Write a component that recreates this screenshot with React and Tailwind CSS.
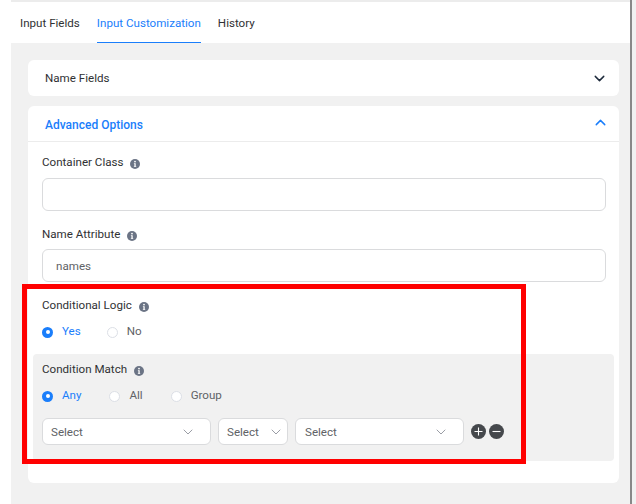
import React from "react";
import { ChevronDown, ChevronUp } from "lucide-react";

function InfoIcon() {
  return (
    <svg width="10" height="10" viewBox="0 0 10 10" className="shrink-0">
      <circle cx="5" cy="5" r="5" fill="#6b7485" />
      <circle cx="5" cy="2.6" r="0.9" fill="#fff" />
      <path d="M3.9 4.2h1.8v3.2h.6v.7H3.8v-.7h.6V4.9h-.5z" fill="#fff" />
    </svg>
  );
}

function Label({ text, className = "" }) {
  return (
    <div className={`flex items-center gap-[7px] h-[16px] text-[11.6px] text-[#303133] ${className}`}>
      <span className="mt-[1px]">{text}</span>
      <span className="mt-[3px]">
        <InfoIcon />
      </span>
    </div>
  );
}

function Radio({ label, checked, className = "" }) {
  return (
    <div className={`flex items-center gap-[9px] ${className}`}>
      {checked ? (
        <span className="w-[11px] h-[11px] rounded-full bg-[#1a7efb] flex items-center justify-center">
          <span className="w-[4px] h-[4px] rounded-full bg-white"></span>
        </span>
      ) : (
        <span className="w-[11px] h-[11px] rounded-full bg-white border border-[#dcdfe6]"></span>
      )}
      <span className={`text-[11.6px] ${checked ? "text-[#1a7efb]" : "text-[#606266]"}`}>{label}</span>
    </div>
  );
}

function FakeSelect({ className = "" }) {
  return (
    <div className={`h-[27px] bg-white border border-[#dadbdd] rounded-[6px] flex items-center justify-between text-[11.6px] text-[#606266] ${className}`}>
      <span className="mt-[3px]">Select</span>
      <ChevronDown size={16} strokeWidth={1.5} className="text-[#9a9da5]" />
    </div>
  );
}

export default function App() {
  return (
    <div className="relative w-[636px] h-[504px] overflow-hidden flex bg-white font-['Roboto','Liberation_Sans',sans-serif]">
      <div className="w-[11px] shrink-0 bg-white"></div>

      <div className="flex-1 flex flex-col bg-[#f1f1f1]">
        {/* tabs */}
        <div className="h-[43px] shrink-0 bg-white border-t-2 border-[#ececec] flex gap-[17px] pl-[9px] text-[11.6px] text-[#303133]">
          <div className="pt-[13px]">Input Fields</div>
          <div className="h-[41px] pt-[13px] border-b border-[#1a7efb] text-[#1a7efb]">Input Customization</div>
          <div className="pt-[13px]">History</div>
        </div>

        <div className="pt-[17px] pl-[17px] pr-[11px] flex flex-col gap-[10px]">
          {/* name fields */}
          <div className="h-[36px] bg-white rounded-[6px] flex items-center justify-between pl-[17px] pr-[11px] text-[11.6px] text-[#303133]">
            <span className="mt-[1px]">Name Fields</span>
            <ChevronDown size={17} strokeWidth={2} className="text-[#1e2b3c]" />
          </div>

          {/* advanced options */}
          <div className="h-[377px] bg-white rounded-[6px]">
            <div className="h-[36px] border-b border-[#ececec] flex items-center justify-between pl-[17px] pr-[10px] text-[12px] font-medium text-[#1a7efb]">
              <span className="mt-[2px]">Advanced Options</span>
              <ChevronUp size={17} strokeWidth={2} className="mb-[3px]" />
            </div>

            <div className="pl-[14px] pr-[13px] pt-[12px]">
              <Label text="Container Class" />
              <div className="mt-[8px] h-[33px] border border-[#dadbdd] rounded-[6px] bg-white"></div>

              <Label text="Name Attribute" className="mt-[15px]" />
              <div className="mt-[7px] h-[33px] border border-[#dadbdd] rounded-[6px] bg-white flex items-center pl-[13px] text-[11.6px] text-[#606266]">
                <span className="mt-[3px]">names</span>
              </div>

              <Label text="Conditional Logic" className="mt-[15px]" />
              <div className="mt-[11px] flex h-[16px] gap-[26px]">
                <Radio label="Yes" checked />
                <Radio label="No" />
              </div>
            </div>

            {/* condition box */}
            <div className="mx-[5px] mt-[14px] h-[107px] bg-[#f1f1f1] rounded-[4px] px-[9px] pt-[7px]">
              <Label text="Condition Match" />
              <div className="mt-[11px] flex h-[16px] gap-[28px]">
                <Radio label="Any" checked />
                <Radio label="All" />
                <Radio label="Group" />
              </div>
              <div className="mt-[14px] flex items-center">
                <FakeSelect className="w-[169px] pl-[8px] pr-[14px]" />
                <FakeSelect className="w-[70px] ml-[7px] pl-[8px] pr-[3px]" />
                <FakeSelect className="w-[169px] ml-[7px] pl-[9px] pr-[14px]" />
                <div className="ml-[7px] flex">
                  <span className="w-[15px] h-[15px] rounded-full bg-[#45484c] flex items-center justify-center">
                    <svg width="9" height="9" viewBox="0 0 9 9"><path d="M4.5 0.5v8M0.5 4.5h8" stroke="#fff" strokeWidth="1.1" /></svg>
                  </span>
                  <span className="w-[15px] h-[15px] ml-[3px] rounded-full bg-[#45484c] flex items-center justify-center">
                    <svg width="9" height="9" viewBox="0 0 9 9"><path d="M0.5 4.5h8" stroke="#fff" strokeWidth="1.1" /></svg>
                  </span>
                </div>
              </div>
            </div>
          </div>
        </div>
      </div>

      {/* right edge */}
      <div className="w-[6px] shrink-0 bg-[#f1f1f1] border-l-2 border-[#888888]"></div>

      {/* red highlight drawn over the shot */}
      <div className="absolute left-[22px] top-[284px] w-[504px] h-[180px] border-[5px] border-[#ff0000]"></div>
    </div>
  );
}
